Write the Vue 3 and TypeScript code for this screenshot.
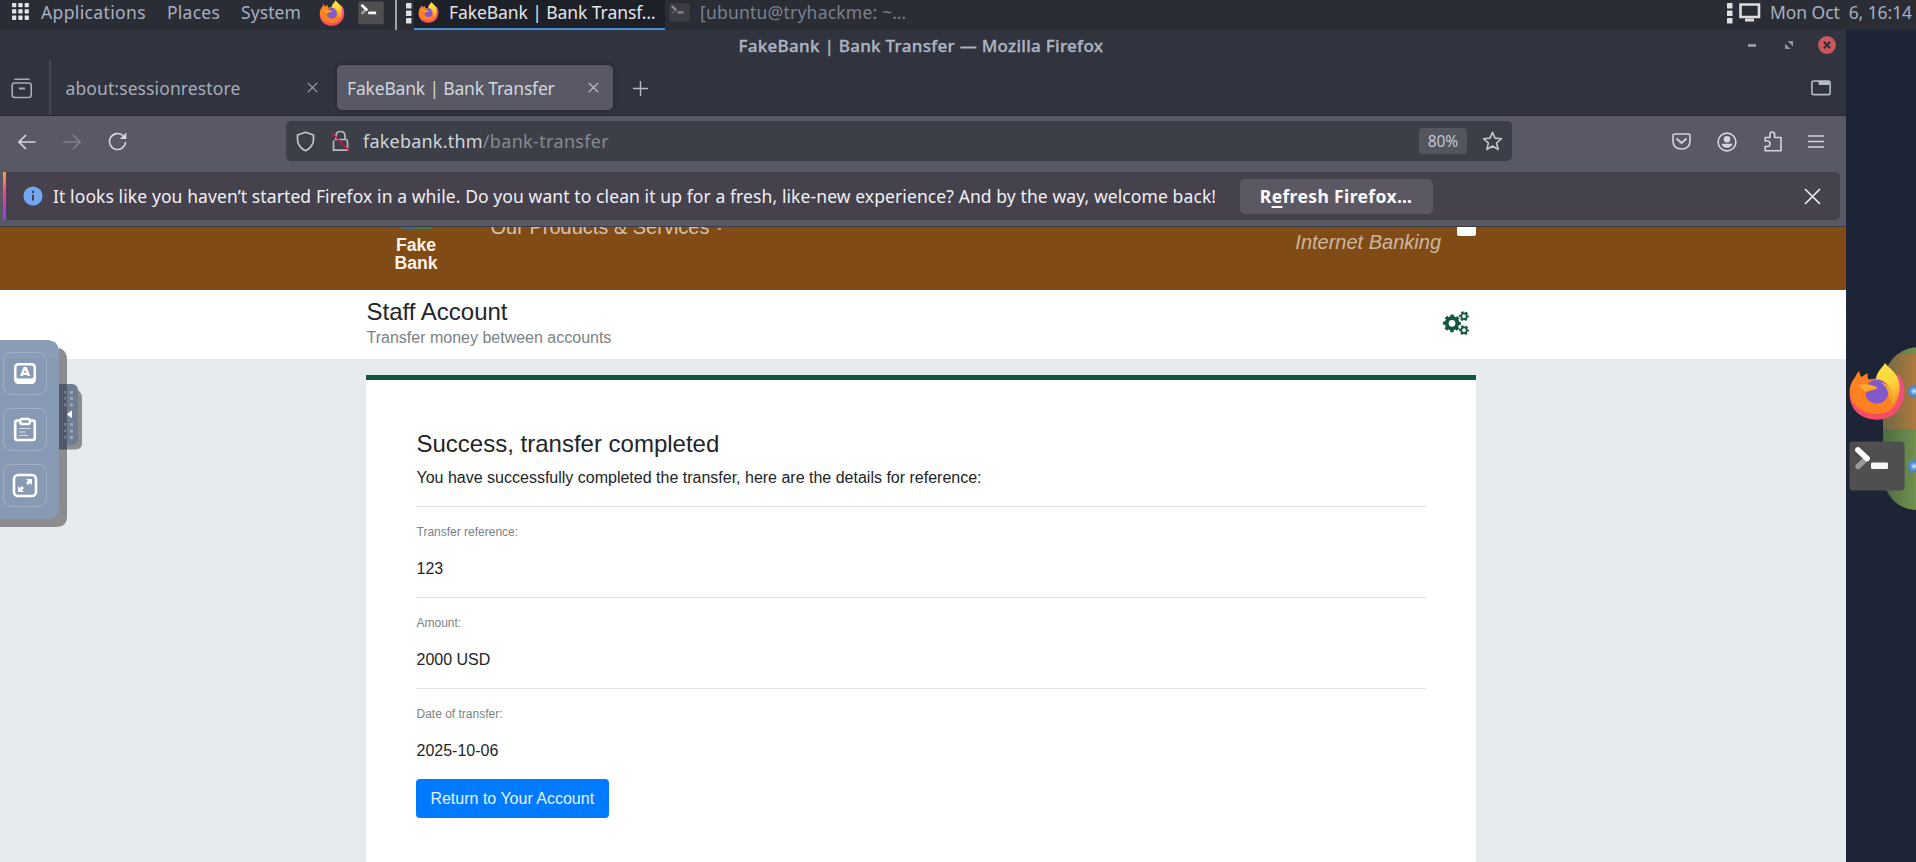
<script setup lang="ts">
interface Detail {
  label: string
  value: string
}

const menus = [
  { label: 'Applications', cls: 'm-apps' },
  { label: 'Places', cls: 'm-places' },
  { label: 'System', cls: 'm-system' },
]

const details: Detail[] = [
  { label: 'Transfer reference:', value: '123' },
  { label: 'Amount:', value: '2000 USD' },
  { label: 'Date of transfer:', value: '2025-10-06' },
]
</script>

<template>
  <div class="desktop">
    <svg class="defs" width="0" height="0">
      <defs>
        <linearGradient id="flame" x1="0" y1="0" x2="0.3" y2="1">
          <stop offset="0" stop-color="#ffe23e" />
          <stop offset="0.6" stop-color="#fdd83b" />
          <stop offset="1" stop-color="#f7a52c" />
        </linearGradient>
        <linearGradient id="pinkBody" x1="0.6" y1="0" x2="0.4" y2="1">
          <stop offset="0" stop-color="#e8508c" />
          <stop offset="1" stop-color="#fb4b62" />
        </linearGradient>
        <symbol id="firefox" viewBox="99 97 168 174">
          <path fill="url(#pinkBody)" d="M101 190C100 245 140 269 183 269C232 269 265 232 265 184C265 162 258 145 248 134L150 150Z" />
          <path fill="#ff8020" d="M101 184C101 160 114 146 120 138C121 132 125 126 130 123C130 132 133 137 137 141C143 137 148 133 155 130C154 138 155 144 158 149L182 148L240 160C252 178 252 206 236 228C222 245 205 251 180 251C136 251 101 222 101 184Z" />
          <path fill="url(#flame)" d="M180 150C180 124 200 114 207 98C214 112 250 128 251 168C252 196 240 215 226 222C232 196 226 170 206 156C198 149 189 147 180 150Z" />
          <circle cx="182" cy="185" r="36" fill="#8159cc" />
          <path fill="#f7a52c" d="M194 158C222 160 234 186 224 214C214 196 220 172 194 158Z" />
          <path fill="#ff8020" d="M122 166C134 160 150 160 164 165C172 168 180 168 185 174C176 182 160 180 149 190C148 202 154 214 162 220C136 216 122 196 122 166Z" />
          <path fill="#fbab30" d="M124 166C138 161 152 162 164 166C172 168 180 169 184 174C170 181 158 178 149 184C140 180 134 172 124 166Z" />
        </symbol>
        <symbol id="terminal" viewBox="0 0 56 50">
          <rect x="0.5" y="0.5" width="55" height="49" rx="3.5" fill="#4f4f4f" />
          <path d="M9 25.5L18 17" stroke="#9a9a9a" stroke-width="5.4" stroke-linecap="round" />
          <path d="M9 9L18 17.500" stroke="#fff" stroke-width="5.800" stroke-linecap="round" />
          <rect x="22" y="21.500" width="17" height="6.400" rx="1.200" fill="#f6f6f6" />
        </symbol>
      </defs>
    </svg>

    <header class="panel">
      <svg class="grid" width="17" height="17" viewBox="0 0 17 17" fill="#e3e4e6">
        <template v-for="r in 3" :key="r">
          <rect v-for="c in 3" :key="c" :x="(c - 1) * 6.3" :y="(r - 1) * 6.3" width="4.300" height="4.300" rx="0.800" />
        </template>
      </svg>
      <span v-for="m in menus" :key="m.label" :class="['menu', m.cls]">{{ m.label }}</span>
      <svg class="p-ff" width="26" height="26"><use href="#firefox" /></svg>
      <svg class="p-term" width="26" height="24"><use href="#terminal" /></svg>
      <i class="sep"></i>
      <svg class="handle" width="6" height="21" viewBox="0 0 6 21" fill="#dfe0e3"><rect width="5.500" height="5.500" y="0" rx=".6" /><rect width="5.500" height="5.500" y="7.500" rx=".6" /><rect width="5.500" height="5.500" y="15" rx=".6" /></svg>
      <div class="task active">
        <svg class="t-ff" width="21" height="21"><use href="#firefox" /></svg>
        <span>FakeBank | Bank Transf…</span>
      </div>
      <div class="task idle">
        <svg class="t-term" width="21" height="19"><use href="#terminal" /></svg>
        <span>[ubuntu@tryhackme: ~…</span>
      </div>
      <div class="tray">
        <svg width="6" height="21" viewBox="0 0 6 21" fill="#dfe0e3"><rect width="5.500" height="5.500" y="0" rx=".6" /><rect width="5.500" height="5.500" y="7.500" rx=".6" /><rect width="5.500" height="5.500" y="15" rx=".6" /></svg>
        <svg class="monitor" width="22" height="19" viewBox="0 0 22 19"><path d="M1.500 1.500H20V14H1.500Z" fill="none" stroke="#dedede" stroke-width="2.600" /><path d="M6 15.500H15V18.500H6Z" fill="#dedede" /></svg>
        <span class="clock">Mon Oct&nbsp; 6, 16:14</span>
      </div>
    </header>

    <div class="workspace">
      <section class="window">
        <div class="titlebar">
          <span class="spacer"></span>
          <span class="win-title">FakeBank | Bank Transfer — Mozilla Firefox</span>
          <div class="win-btns">
            <svg width="8" height="3"><rect width="8" height="3" fill="#8f95a2" /></svg>
            <svg width="8" height="8" viewBox="0 0 8 8" fill="#8f95a2"><path d="M2.500 0H8V5.500Z" /><path d="M0 2.500V8H5.500Z" /></svg>
            <svg width="18" height="18" viewBox="0 0 18 18"><circle cx="9" cy="9" r="8.900" fill="#cc575d" /><path d="M5.800 5.800L12.200 12.200M12.200 5.800L5.800 12.200" stroke="#2f323c" stroke-width="2.200" /></svg>
          </div>
        </div>

        <div class="tabstrip">
          <div class="firefox-view">
            <svg width="22" height="21" viewBox="0 0 22 21" fill="none" stroke="#a5abb8" stroke-width="1.600"><path d="M4 1.200H18" stroke-linecap="round" /><rect x="1.200" y="5" width="19" height="14.500" rx="2.500" /><path d="M8 10.500H14" stroke-width="2" /></svg>
          </div>
          <div class="tab plain">
            <span>about:sessionrestore</span>
            <svg width="11" height="11" viewBox="0 0 11 11"><path d="M.8 .8L10.200 10.200M10.200 .8L.8 10.200" stroke="#a0a6b2" stroke-width="1.200" /></svg>
          </div>
          <div class="tab current">
            <span>FakeBank | Bank Transfer</span>
            <svg width="11" height="11" viewBox="0 0 11 11"><path d="M.8 .8L10.200 10.200M10.200 .8L.8 10.200" stroke="#c3c8d2" stroke-width="1.200" /></svg>
          </div>
          <svg class="plus" width="15" height="15" viewBox="0 0 15 15"><path d="M7.500 0V15M0 7.500H15" stroke="#b4bac6" stroke-width="1.400" /></svg>
          <svg class="all-tabs" width="20" height="16" viewBox="0 0 20 16"><rect x=".9" y="1" width="18.200" height="13.600" rx="1.800" fill="none" stroke="#b4bcca" stroke-width="1.600" /><path d="M7 1H18.500V5H9Q7.500 5 7.500 3.500Z" fill="#b4bcca" /></svg>
        </div>

        <div class="toolbar">
          <div class="nav">
            <svg width="18" height="16" viewBox="0 0 18 16" fill="none" stroke="#d2d6e0" stroke-width="1.700"><path d="M17.500 8H1M8 1L1 8L8 15" /></svg>
            <svg width="18" height="16" viewBox="0 0 18 16" fill="none" stroke="#7e818d" stroke-width="1.700"><path d="M.5 8H17M10 1L17 8L10 15" /></svg>
            <svg width="19" height="19" viewBox="0 0 19 19"><path d="M17.500 10A8 8 0 1 1 15 3.700" fill="none" stroke="#d2d6e0" stroke-width="1.600" /><path d="M18.300 .5V7H11.800Z" fill="#d2d6e0" /></svg>
          </div>
          <div class="urlbar">
            <svg width="19" height="21" viewBox="0 0 19 21" fill="none" stroke="#c0c5d0" stroke-width="1.700"><path d="M9.500 1.200L17.500 4V8.500C17.500 13.500 14 18 9.500 19.800C5 18 1.500 13.500 1.500 8.500V4Z" stroke-linejoin="round" /></svg>
            <svg class="lock" width="19" height="22" viewBox="0 0 19 22" fill="none"><path d="M5 9V6Q5 1.500 9.500 1.500Q14 1.500 14 6V9M3.500 9.500H14.500Q16.500 9.500 16.500 11.500V20.200H2.500V10.500" stroke="#b3b8c3" stroke-width="1.700" /><path d="M.8 3L18.500 21" stroke="#c9173f" stroke-width="1.700" /></svg>
            <span class="url"><span class="host">fakebank.thm</span><span class="path">/bank-transfer</span></span>
            <span class="zoom">80%</span>
            <svg class="star" width="21" height="20" viewBox="0 0 21 20"><path d="M10.500 1.300L13 7.100L19.500 7.700L14.600 12L16.200 18.500L10.500 15L4.800 18.500L6.400 12L1.500 7.700L8 7.100Z" fill="none" stroke="#c0c5d0" stroke-width="1.600" stroke-linejoin="round" /></svg>
          </div>
          <div class="actions">
            <svg width="19" height="17" viewBox="0 0 19 17" fill="none" stroke="#d2d6e0" stroke-width="1.600"><path d="M2.500 1H16.500Q18 1 18 2.500V7.500Q18 16 9.500 16Q1 16 1 7.500V2.500Q1 1 2.500 1Z" /><path d="M5 6L9.500 10L14 6" stroke-width="1.800" stroke-linecap="round" /></svg>
            <svg width="20" height="20" viewBox="0 0 20 20"><circle cx="10" cy="10" r="8.900" fill="none" stroke="#d2d6e0" stroke-width="1.600" /><circle cx="10" cy="7.300" r="3.300" fill="#d2d6e0" /><path d="M4.500 11.800H15.500Q14.500 15.800 10 15.800Q5.500 15.800 4.500 11.800Z" fill="#d2d6e0" /></svg>
            <svg width="18" height="21" viewBox="0 0 18 21" fill="none" stroke="#d2d6e0" stroke-width="1.600"><path d="M1.200 10V6.500H6V3.500Q6 1 8.300 1Q10.600 1 10.600 3.500V6.500H17V19.800H1.200V15.500H3.500Q6 15.500 6 12.800Q6 10 3.500 10Z" stroke-linejoin="round" /></svg>
            <svg width="16" height="13" viewBox="0 0 16 13"><path d="M0 1H16M0 6.500H16M0 12H16" stroke="#d2d6e0" stroke-width="1.600" /></svg>
          </div>
        </div>

        <div class="notice">
          <i class="accent"></i>
          <svg class="info" width="20" height="20" viewBox="0 0 20 20"><circle cx="10" cy="10" r="9.600" fill="#73a7f3" /><path d="M10 8.500V14.500M10 4.800V7" stroke="#45414d" stroke-width="2" /></svg>
          <span class="msg">It looks like you haven’t started Firefox in a while. Do you want to clean it up for a fresh, like-new experience? And by the way, welcome back!</span>
          <button class="refresh">R<u>e</u>fresh Firefox…</button>
          <svg class="close" width="17" height="17" viewBox="0 0 17 17"><path d="M1 1L16 16M16 1L1 16" stroke="#f0f0f4" stroke-width="1.600" /></svg>
        </div>

        <main class="page">
          <div class="bank-header">
            <div class="container header-row">
              <div class="logo">
                <i class="mark"></i>
                <span>Fake</span>
                <span>Bank</span>
              </div>
              <span class="products">Our Products &amp; Services <i></i></span>
              <span class="internet">Internet Banking</span>
              <i class="flag"></i>
            </div>
          </div>

          <div class="account">
            <div class="container account-row">
              <div>
                <h4>Staff Account</h4>
                <p>Transfer money between accounts</p>
              </div>
              <svg class="gears" width="27" height="25" viewBox="0 0 27 25" fill="none" stroke="#13573f">
                <circle cx="9" cy="12.300" r="5.300" stroke-width="3.800" />
                <circle cx="9" cy="12.300" r="7.600" stroke-width="2.600" stroke-dasharray="3.400 2.569" stroke-dashoffset="1.700" />
                <g v-for="cy in [5.2, 19.2]" :key="cy">
                  <circle cx="21" :cy="cy" r="2.800" stroke-width="1.900" />
                  <circle cx="21" :cy="cy" r="4.200" stroke-width="1.600" stroke-dasharray="2.300 2.098" stroke-dashoffset="1.150" />
                </g>
              </svg>
            </div>
          </div>

          <div class="container card">
            <h4>Success, transfer completed</h4>
            <p>You have successfully completed the transfer, here are the details for reference:</p>
            <div v-for="d in details" :key="d.label" class="detail">
              <small>{{ d.label }}</small>
              <p>{{ d.value }}</p>
            </div>
            <button class="return">Return to Your Account</button>
          </div>
        </main>
      </section>

      <aside class="backdrop">
        <svg width="70" height="200" viewBox="30 0 70 200">
          <defs>
            <clipPath id="blob"><path d="M100 17.300C80 19 67 36 67 56V142C67 164 80 179 100 180Z" /></clipPath>
            <linearGradient id="warm" x1="0" x2="1"><stop offset="0" stop-color="#6d6746" /><stop offset="1" stop-color="#b07a3c" /></linearGradient>
            <linearGradient id="green" x1="0" x2="1"><stop offset="0" stop-color="#4d6a40" /><stop offset="1" stop-color="#72904f" /></linearGradient>
            <radialGradient id="glow"><stop offset="0" stop-color="#e6f1ff" /><stop offset=".3" stop-color="#78aef0" /><stop offset=".6" stop-color="#4a83cf" /><stop offset="1" stop-color="#4a83cf" stop-opacity="0" /></radialGradient>
          </defs>
          <g clip-path="url(#blob)">
            <rect x="66" y="17" width="34" height="164" fill="url(#green)" />
            <rect x="66" y="24" width="34" height="75" fill="url(#warm)" />
          </g>
          <circle cx="98" cy="61.300" r="7.500" fill="url(#glow)" />
          <circle cx="98" cy="136.300" r="7.500" fill="url(#glow)" />
          <use href="#firefox" x="33" y="32.300" width="56" height="58" />
          <use href="#terminal" x="33" y="111" width="56" height="50" />
        </svg>
      </aside>
    </div>

    <div class="dock">
      <svg width="84" height="190" viewBox="0 0 84 190" fill="none">
        <path d="M59 8Q67 10 67 20V176Q67 187 56 187H0V179H50Z" fill="#8c8c8c" />
        <path d="M59 49H75Q82 51 82 58V103Q82 109.500 75 109.500H59Z" fill="#8c8c8c" />
        <path d="M59 44H72Q78 44 78 51V98Q78 105 72 105H59Z" fill="#6f7d93" />
        <path d="M59 44H67V109.500H59Z" fill="#50596a" />
        <path d="M0 0H47Q59 1 59 13V167Q59 179 47 179H0Z" fill="#8899b4" />
        <path d="M0 0H47Q59 1 59 13V19H0Z" fill="#8b9db6" />
        <g fill="#9aa5b6">
          <template v-for="y in [51, 57, 63.500, 83, 89.500, 96]" :key="y">
            <rect x="64" :y="y" width="2.500" height="2.500" opacity=".5" />
            <rect x="70" :y="y" width="3" height="3" />
          </template>
        </g>
        <path d="M71.500 71V77.500L67.300 74.300Z" fill="#fff" stroke="#fff" />
        <g stroke="#a1afc5">
          <rect x="3.500" y="12.500" width="43" height="42" rx="8" />
          <rect x="3.500" y="68.500" width="43" height="42" rx="8" />
          <rect x="3.500" y="124.500" width="43" height="42" rx="8" />
        </g>
        <rect x="14" y="23" width="22" height="21" rx="4.500" fill="#fff" />
        <rect x="16.500" y="25.500" width="17" height="13" rx="2" fill="#8899b4" />
        <rect x="15.200" y="80.500" width="19.600" height="19.500" rx="2" stroke="#fff" stroke-width="2.600" />
        <rect x="20.300" y="79" width="9.500" height="5" rx="1.500" stroke="#fff" stroke-width="2.400" fill="#8899b4" />
        <path d="M19 88.500H30.500M19 92H25.500M19 95.500H28" stroke="#d8dfe9" stroke-width="1.200" />
        <rect x="14" y="135" width="22" height="21" rx="4" stroke="#fff" stroke-width="2.600" />
        <path d="M26 139H32V145L30 143L28 145L26 143L28 141ZM24 152H18V146L20 148L22 146L24 148L22 150Z" fill="#fff" />
      </svg>
      <span class="key">A</span>
    </div>
  </div>
</template>

<style>
html,
body {
  margin: 0;
  overflow: hidden;
}
</style>

<style scoped>
.desktop {
  position: relative;
  width: 1916px;
  height: 862px;
  overflow: hidden;
  background: #1c2436;
  font-family: 'Noto Sans', 'Open Sans', sans-serif;
  font-size: 17.5px;
  white-space: nowrap;
  display: flex;
  flex-direction: column;
}
.defs { position: absolute; }
svg { display: block; flex: none; }
i { display: block; }
h4, p { margin: 0; font-weight: 400; }
button { border: 0; padding: 0; font-family: inherit; }

.panel {
  height: 30px;
  flex: none;
  background: #2b2d36;
  color: #a7b0c0;
  display: flex;
  align-items: flex-start;
  line-height: 24px;
}
.grid { margin: 3px 0 0 12px; }
.m-apps { margin-left: 12px; width: 126px; letter-spacing: 0.37px; }
.m-places { width: 74px; letter-spacing: 0.24px; }
.m-system { width: 78px; letter-spacing: 0.08px; }
.p-ff { margin-top: -0.5px; }
.p-term { margin: 0.5px 0 0 13px; }
.sep { width: 2px; height: 30px; margin-left: 11px; background: #a2a4aa; }
.handle { margin: 2.5px 2px 0 9px; }
.task { display: flex; height: 30px; box-sizing: border-box; }
.task.active { width: 251px; background: #1d2027; border-bottom: 2.5px solid #4a90d9; color: #e3e5e9; }
.task.active span { margin-left: 10px; letter-spacing: -0.08px; }
.task.idle { color: #7a808d; }
.task.idle span { margin-left: 10px; letter-spacing: 0.21px; }
.t-ff { margin: 2px 0 0 4px; }
.t-term { margin: 3px 0 0 4px; opacity: 0.45; }
.tray { margin-left: auto; display: flex; align-items: flex-start; padding-right: 4px; }
.tray svg { margin-top: 2.5px; }
.tray .monitor { margin: 3px 0 0 6px; }
.clock { margin-left: 9px; letter-spacing: -0.08px; }

.workspace { display: flex; flex: 1; min-height: 0; }
.window { width: 1846px; flex: none; background: #585964; display: flex; flex-direction: column; }

.titlebar { height: 30px; background: #31343e; display: flex; justify-content: space-between; align-items: flex-start; }
.spacer { width: 738.5px; }
.win-title { font-size: 17px; font-weight: 500; letter-spacing: 0.28px; color: #adb5c3; line-height: 32px; -webkit-text-stroke: 0.3px #adb5c3; }
.win-btns { flex: 1; display: flex; justify-content: flex-end; align-items: center; height: 30px; gap: 25px; padding-right: 10px; }
.win-btns svg:first-child { margin-right: 4px; }

.tabstrip { height: 56px; box-sizing: border-box; background: #31343e; border-bottom: 1.5px solid #24262f; display: flex; }
.firefox-view { width: 49px; height: 55px; border-right: 2px solid #444753; }
.firefox-view svg { margin: 17.5px 0 0 11px; }
.tab { margin-top: 5px; height: 45px; border-radius: 5px; display: flex; align-items: center; justify-content: space-between; box-sizing: border-box; }
.tab.plain { width: 286px; padding: 0 19.5px 0 14.5px; color: #a5adba; letter-spacing: 0.11px; }
.tab.current { width: 276px; padding: 0 14.5px 0 10px; background: #585964; color: #d0d5de; letter-spacing: -0.18px; box-shadow: 0 0 4px rgba(0, 0, 0, 0.4); }
.plus { margin: 21px 0 0 20px; }
.all-tabs { margin: 19.5px 15px 0 auto; }

.toolbar { height: 56px; display: flex; align-items: flex-start; }
.nav { width: 286px; height: 51px; display: flex; align-items: center; padding-left: 18px; gap: 27px; box-sizing: border-box; }
.urlbar { width: 1226px; height: 40px; margin-top: 5px; border-radius: 5px; background: #3c3f47; display: flex; align-items: center; padding: 0 9.5px 0 10px; box-sizing: border-box; color: #d0d5de; }
.lock { margin-left: 16px; }
.url { margin-left: 13px; font-size: 18px; }
.host { letter-spacing: 0.21px; }
.path { letter-spacing: 0.34px; color: #858a93; }
.zoom { margin-left: auto; width: 48px; height: 26px; border-radius: 4px; background: #54565f; color: #c0c7d3; text-align: center; line-height: 26px; font-size: 15.5px; letter-spacing: -0.1px; }
.star { margin-left: 14.5px; }
.actions { flex: 1; height: 51px; display: flex; align-items: center; justify-content: flex-end; gap: 26.500px; padding-right: 22px; }

.notice { flex: none; height: 48px; margin: 0 6px 6px 3px; background: #45414d; border-radius: 0 5px 5px 0; display: flex; align-items: center; color: #f0f0f4; }
.accent { width: 3px; height: 48px; background: linear-gradient(#f9a53c, #ee3f93 45%, #8445ee); }
.info { margin-left: 17px; }
.msg { margin-left: 10px; width: 1186.5px; letter-spacing: 0.095px; }
.refresh { width: 193px; height: 35px; border-radius: 5px; background: #5b5863; color: #fbfbfe; font-size: 17.5px; font-weight: 700; letter-spacing: 0.37px; }
.refresh u { text-underline-offset: 3px; text-decoration-thickness: 2px; }
.close { margin: 0 19.5px 0 auto; }

.page { flex: 1; background: #e8ebee; border-top: 1.5px solid #3b3b48; overflow: hidden; font-family: 'Liberation Sans', Arial, sans-serif; font-size: 16px; color: #212529; }
.container { width: 1110px; margin-left: 366px; }
.bank-header { height: 62.5px; background: #804b15; overflow: hidden; }
.header-row { display: flex; align-items: flex-start; height: 62px; }
.logo { width: 100px; margin-right: 24.500px; display: flex; flex-direction: column; align-items: center; font-size: 17.600px; line-height: 18.300px; font-weight: 700; color: #fbf4ec; }
.logo .mark { width: 30px; height: 2px; margin-bottom: 6.500px; background: linear-gradient(90deg, #346a8c 50%, #3f7b44 50%); }
.products { font-size: 20px; line-height: 24px; margin-top: -12.500px; color: #d4c3b0; display: flex; }
.products i { width: 3px; height: 1.500px; margin: 13.500px 0 0 9px; background: #b79c7e; }
.internet { margin: 2.500px 0 0 auto; font-size: 20px; line-height: 24px; font-style: italic; color: #ccb7a1; }
.flag { width: 19.500px; height: 8.500px; margin-left: 15.500px; background: #fff; border-radius: 0 0 2px 2px; }

.account { height: 69px; background: #fff; }
.account-row { display: flex; justify-content: space-between; padding-top: 8px; }
.account h4 { font-size: 24px; line-height: 28px; text-indent: 0.5px; }
.account p { line-height: 24px; margin-top: 0.5px; color: #7c8186; text-indent: 0.5px; }
.gears { margin: 13px 6.500px 0 0; }

.card { box-sizing: border-box; height: 520px; margin-top: 16px; border-top: 5px solid #10553f; background: #fff; padding: 50px; }
.card h4 { font-size: 24px; line-height: 28.800px; text-indent: 0.5px; }
.card > p { line-height: 24px; margin: 7.500px 0 16px; text-indent: 0.5px; }
.detail { border-top: 1px solid #e3e3e3; padding: 16px 0; text-indent: 0.5px; }
.detail small { display: block; font-size: 12px; line-height: 18.200px; color: #7d8287; }
.detail p { line-height: 24px; margin-top: 16px; }
.return { width: 192.5px; height: 38.5px; border-radius: 4px; background: #007bff; color: #e8f2ff; font-size: 16px; }

.backdrop { width: 70px; flex: none; padding-top: 300px; }

.dock { position: absolute; left: 0; top: 340px; width: 84px; }
.key { position: absolute; left: 14px; top: 25px; width: 22px; text-align: center; color: #fff; font: 800 13px/14px 'DejaVu Sans', sans-serif; }
</style>
